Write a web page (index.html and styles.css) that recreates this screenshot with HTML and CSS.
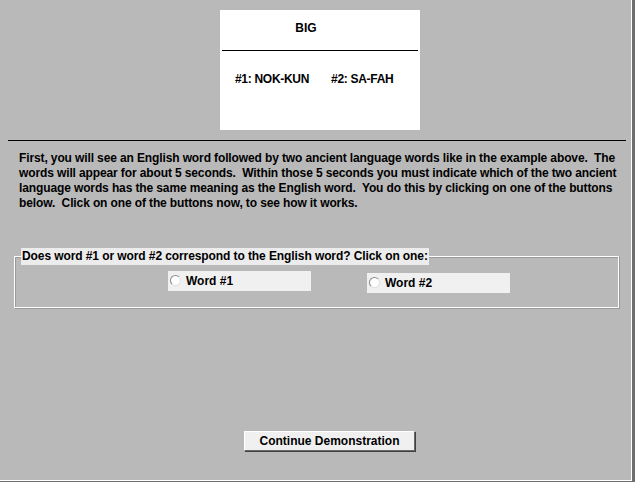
FILE: index.html
```html
<!DOCTYPE html>
<html>
<head>
<meta charset="utf-8">
<link rel="stylesheet" href="styles.css">
</head>
<body>
<div class="window">
  <div class="card">
    <div class="english">BIG</div>
    <div class="card-rule"></div>
    <div class="choices"><span>#1: NOK-KUN</span><span>#2: SA-FAH</span></div>
  </div>
  <div class="rule"></div>
  <p class="instructions">First, you will see an English word followed by two ancient language words like in the example above.&nbsp; The words will appear for about 5 seconds.&nbsp; Within those 5 seconds you must indicate which of the two ancient language words has the same meaning as the English word.&nbsp; You do this by clicking on one of the buttons below.&nbsp; Click on one of the buttons now, to see how it works.</p>
  <fieldset class="group">
    <legend>Does word #1 or word #2 correspond to the English word? Click on one:</legend>
    <div class="radios">
      <label class="radio r1"><span class="dot"></span>Word #1</label>
      <label class="radio r2"><span class="dot"></span>Word #2</label>
    </div>
  </fieldset>
  <div class="actions"><button class="btn">Continue Demonstration</button></div>
</div>
</body>
</html>
```
FILE: styles.css
```css
html, body { margin: 0; padding: 0; }
body {
  background: #6e6e6e;
  font-family: "Liberation Sans", Arial, sans-serif;
  font-weight: bold;
  color: #000;
  width: 635px;
  height: 482px;
  overflow: hidden;
}
.window {
  width: 631px;
  height: 480px;
  background: #b9b9b9;
  border-right: 1px solid #ffffff;
  border-bottom: 1px solid #ffffff;
  display: flex;
  flex-direction: column;
}
.card {
  margin: 10px 0 0 220px;
  width: 200px;
  height: 120px;
  background: #ffffff;
  font-size: 12px;
  display: flex;
  flex-direction: column;
}
.english {
  text-align: center;
  padding-top: 11px;
  height: 29px;
  box-sizing: border-box;
  padding-right: 28px;
}
.card-rule {
  margin: 11px 2px 0 2px;
  height: 1px;
  background: #000;
}
.choices {
  display: flex;
  gap: 22px;
  padding: 21px 0 0 15px;
  letter-spacing: -0.3px;
}
.rule {
  margin: 10px 0 0 8px;
  width: 618px;
  height: 1px;
  background: #000;
}
.instructions {
  margin: 10px 0 0 19px;
  width: 606px;
  font-size: 12px;
  line-height: 15px;
  letter-spacing: -0.12px;
}
.group {
  margin: 37px 0 0 14px;
  width: 605px;
  height: 60px;
  box-sizing: border-box;
  border: 1px solid #ffffff;
  box-shadow: inset 1px 1px 0 #9a9a9a, 1px 1px 0 #9a9a9a;
  padding: 0;
}
.group legend {
  margin-left: 6px;
  padding: 0 1px;
  background: #ececec;
  font-size: 12px;
  line-height: 17px;
  letter-spacing: -0.09px;
}
.radios {
  display: flex;
  padding-left: 153px;
  gap: 56px;
  margin-top: 6px;
}
.radio {
  width: 143px;
  height: 20px;
  background: #f0f0f0;
  display: flex;
  align-items: center;
  font-size: 12px;
  box-sizing: border-box;
  padding-left: 2px;
}
.radio.r2 { margin-top: 2px; }
.dot {
  width: 9px;
  height: 9px;
  border-radius: 50%;
  border: 1px solid #8a8a8a;
  border-right-color: #e0e0e0;
  border-bottom-color: #e0e0e0;
  background: #fff;
  margin-right: 5px;
  margin-bottom: 2px;
}
.actions {
  margin: 123px 0 0 244px;
}
.btn {
  width: 171px;
  height: 20px;
  background: #f0f0f0;
  font-family: "Liberation Sans", Arial, sans-serif;
  font-weight: bold;
  font-size: 12px;
  color: #000;
  border: 1px solid;
  border-color: #ffffff #6a6a6a #6a6a6a #ffffff;
  box-shadow: 1px 1px 0 #404040;
  padding: 0;
}
```
